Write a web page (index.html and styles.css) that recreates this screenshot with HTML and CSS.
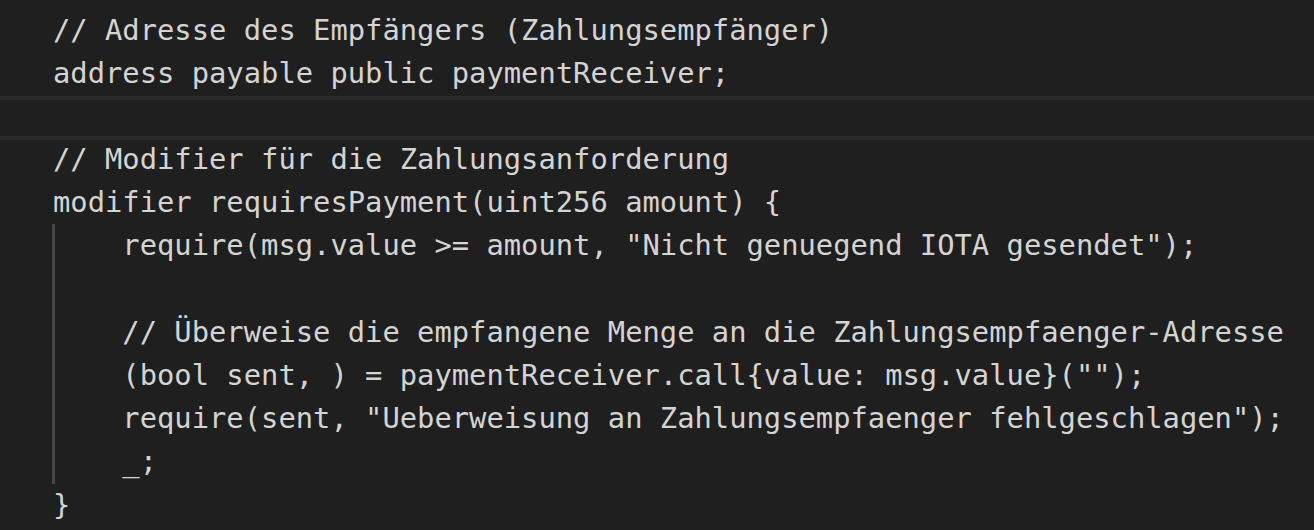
FILE: index.html
```html
<!DOCTYPE html>
<html lang="de">
<head>
<meta charset="utf-8">
<link rel="stylesheet" href="styles.css">
</head>
<body>
<div class="editor">
  <div class="line">// Adresse des Empfängers (Zahlungsempfänger)</div>
  <div class="line">address payable public paymentReceiver;</div>
  <div class="line current"> </div>
  <div class="line">// Modifier für die Zahlungsanforderung</div>
  <div class="line">modifier requiresPayment(uint256 amount) {</div>
  <div class="block">
    <div class="line">    require(msg.value &gt;= amount, "Nicht genuegend IOTA gesendet");</div>
    <div class="line"> </div>
    <div class="line">    // Überweise die empfangene Menge an die Zahlungsempfaenger-Adresse</div>
    <div class="line">    (bool sent, ) = paymentReceiver.call{value: msg.value}("");</div>
    <div class="line">    require(sent, "Ueberweisung an Zahlungsempfaenger fehlgeschlagen");</div>
    <div class="line">    _;</div>
  </div>
  <div class="line">}</div>
</div>
</body>
</html>
```
FILE: styles.css
```css
html, body {
  margin: 0;
  padding: 0;
  background: #1f1f1f;
  overflow: hidden;
}
.editor {
  padding-top: 8.5px;
  font-family: "DejaVu Sans Mono", "Liberation Mono", monospace;
  font-size: 28.8px;
  color: #d4d4d4;
}
.line {
  height: 43.2px;
  line-height: 43.2px;
  white-space: pre;
  padding-left: 53px;
}
.current {
  box-sizing: border-box;
  border-top: 4px solid #2a2a2a;
  border-bottom: 4px solid #2a2a2a;
  margin-top: 1px;
  height: 44px;
  margin-bottom: -1.8px;
}
.block {
  margin-left: 52px;
  box-shadow: inset 3px 0 0 #464646;
}
.block .line {
  padding-left: 1px;
}
```
